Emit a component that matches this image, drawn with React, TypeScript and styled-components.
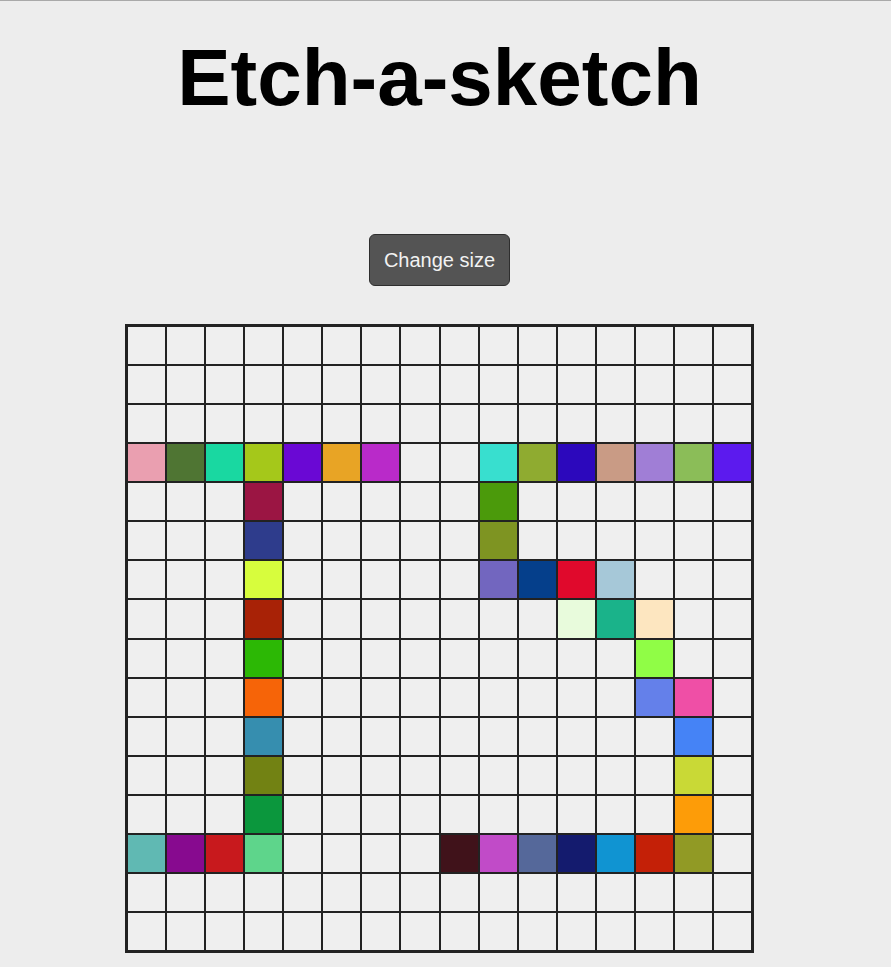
import React from "react";
import styled, { createGlobalStyle } from "styled-components";

const GlobalStyle = createGlobalStyle`
  html, body {
    margin: 0;
    padding: 0;
    background: #ededed;
  }
  body {
    border-top: 1px solid #a9a9a9;
    font-family: "Liberation Sans", Arial, sans-serif;
  }
`;

const Page = styled.main`
  width: 879px;
  display: flex;
  flex-direction: column;
  align-items: center;
  padding-top: 31px;
`;

const Title = styled.h1`
  margin: 0;
  font-family: "Liberation Sans", Arial, sans-serif;
  font-weight: 700;
  font-size: 80px;
  line-height: 92px;
  color: #000;
`;

const ResizeButton = styled.button`
  margin-top: 110px;
  height: 52px;
  padding: 0 14px;
  background: #545454;
  color: #f2f2f2;
  border: 1px solid #2e2e2e;
  border-radius: 6px;
  font-family: "Liberation Sans", Arial, sans-serif;
  font-size: 20px;
  cursor: pointer;
`;

const Board = styled.div`
  margin-top: 38px;
  box-sizing: content-box;
  width: 625px;
  height: 625px;
  border: 2px solid #222;
  display: grid;
  grid-template-columns: repeat(16, 1fr);
  grid-template-rows: repeat(16, 1fr);
  background: #efefef;
`;

const Cell = styled.div<{ $color?: string }>`
  box-sizing: border-box;
  border: 1px solid #222;
  background: ${(p) => p.$color ?? "#efefef"};
`;

const painted: Record<string, string> = {
  "3,0": "#ea9fb0",
  "3,1": "#4f7533",
  "3,2": "#19d8a1",
  "3,3": "#a5c81a",
  "3,4": "#6a08d4",
  "3,5": "#e8a425",
  "3,6": "#b92ac9",
  "3,9": "#38dfcf",
  "3,10": "#8fab30",
  "3,11": "#2c08bc",
  "3,12": "#c99b85",
  "3,13": "#a07ed6",
  "3,14": "#8bbd58",
  "3,15": "#5c1aee",
  "4,3": "#9b1543",
  "4,9": "#4b9a0b",
  "5,3": "#2e3c8c",
  "5,9": "#7e9422",
  "6,3": "#d7fd3d",
  "6,9": "#7266bf",
  "6,10": "#053f8b",
  "6,11": "#e0092c",
  "6,12": "#a6c8d8",
  "7,3": "#a82206",
  "7,11": "#e8fbdc",
  "7,12": "#1ab38a",
  "7,13": "#fde6c0",
  "8,3": "#2cb805",
  "8,13": "#90fd46",
  "9,3": "#f66408",
  "9,13": "#6480ea",
  "9,14": "#ef4fa6",
  "10,3": "#368eaf",
  "10,14": "#4583f6",
  "11,3": "#728213",
  "11,14": "#c9d936",
  "12,3": "#0b973d",
  "12,14": "#fd9c08",
  "13,0": "#60b9b3",
  "13,1": "#870a8f",
  "13,2": "#c8191d",
  "13,3": "#5ed58b",
  "13,8": "#40121a",
  "13,9": "#c14bc8",
  "13,10": "#55689a",
  "13,11": "#141b6e",
  "13,12": "#1094d2",
  "13,13": "#c42007",
  "13,14": "#919a25",
};

const SIZE = 16;

export default function App() {
  const cells = [];
  for (let r = 0; r < SIZE; r++) {
    for (let c = 0; c < SIZE; c++) {
      cells.push(<Cell key={`${r}-${c}`} $color={painted[`${r},${c}`]} />);
    }
  }
  return (
    <>
      <GlobalStyle />
      <Page>
        <Title>Etch-a-sketch</Title>
        <ResizeButton type="button">Change size</ResizeButton>
        <Board>{cells}</Board>
      </Page>
    </>
  );
}
